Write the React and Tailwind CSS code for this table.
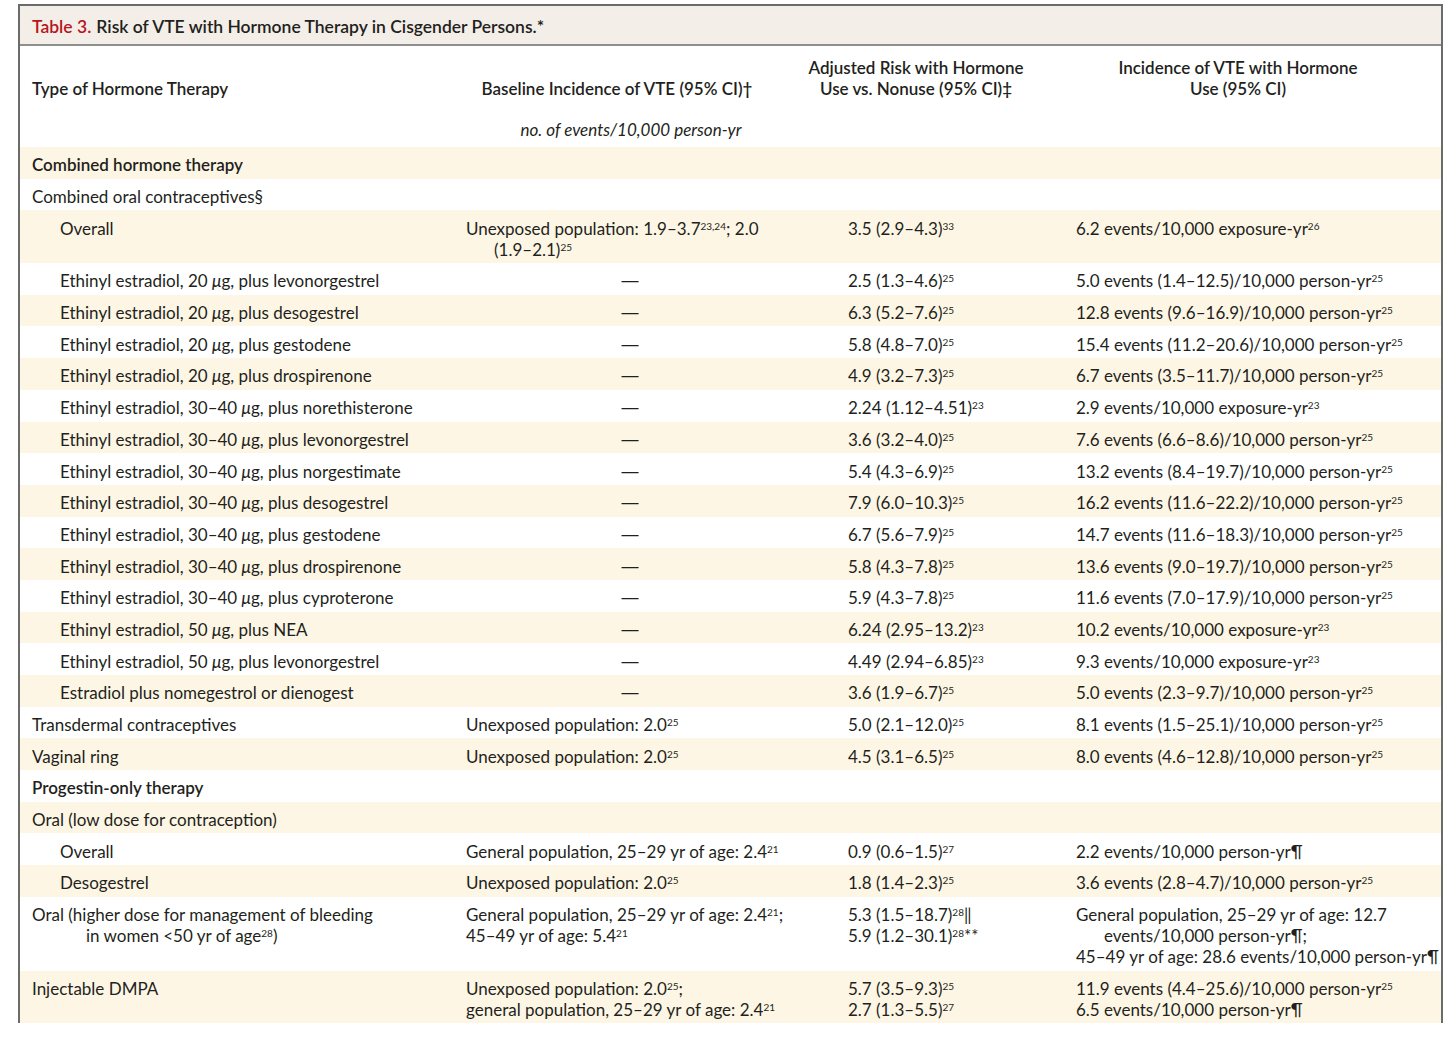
const S = ({ children }) => (
  <sup className="text-[10px]">{children}</sup>
);

const Mu = () => <span className="italic">μ</span>;

const Dash = () => (
  <div
    className="-ml-[10px] w-[348px] text-center"
    style={{ fontFamily: "'Liberation Sans', sans-serif" }}
  >
    —
  </div>
);

const rows = [
  { group: true, a: "Combined hormone therapy" },
  { a: "Combined oral contraceptives§" },
  {
    ind: true,
    a: "Overall",
    b: (
      <>
        <div>
          Unexposed population: 1.9–3.7<S>23,24</S>; 2.0
        </div>
        <div className="pl-[28px]">
          (1.9–2.1)<S>25</S>
        </div>
      </>
    ),
    c: (
      <>
        3.5 (2.9–4.3)<S>33</S>
      </>
    ),
    d: (
      <>
        6.2 events/10,000 exposure-yr<S>26</S>
      </>
    ),
  },
  { ind: true, dose: "20", drug: "levonorgestrel", c: ["2.5 (1.3–4.6)", "25"], d: ["5.0 events (1.4–12.5)/10,000 person-yr", "25"] },
  { ind: true, dose: "20", drug: "desogestrel", c: ["6.3 (5.2–7.6)", "25"], d: ["12.8 events (9.6–16.9)/10,000 person-yr", "25"] },
  { ind: true, dose: "20", drug: "gestodene", c: ["5.8 (4.8–7.0)", "25"], d: ["15.4 events (11.2–20.6)/10,000 person-yr", "25"] },
  { ind: true, dose: "20", drug: "drospirenone", c: ["4.9 (3.2–7.3)", "25"], d: ["6.7 events (3.5–11.7)/10,000 person-yr", "25"] },
  { ind: true, dose: "30–40", drug: "norethisterone", c: ["2.24 (1.12–4.51)", "23"], d: ["2.9 events/10,000 exposure-yr", "23"] },
  { ind: true, dose: "30–40", drug: "levonorgestrel", c: ["3.6 (3.2–4.0)", "25"], d: ["7.6 events (6.6–8.6)/10,000 person-yr", "25"] },
  { ind: true, dose: "30–40", drug: "norgestimate", c: ["5.4 (4.3–6.9)", "25"], d: ["13.2 events (8.4–19.7)/10,000 person-yr", "25"] },
  { ind: true, dose: "30–40", drug: "desogestrel", c: ["7.9 (6.0–10.3)", "25"], d: ["16.2 events (11.6–22.2)/10,000 person-yr", "25"] },
  { ind: true, dose: "30–40", drug: "gestodene", c: ["6.7 (5.6–7.9)", "25"], d: ["14.7 events (11.6–18.3)/10,000 person-yr", "25"] },
  { ind: true, dose: "30–40", drug: "drospirenone", c: ["5.8 (4.3–7.8)", "25"], d: ["13.6 events (9.0–19.7)/10,000 person-yr", "25"] },
  { ind: true, dose: "30–40", drug: "cyproterone", c: ["5.9 (4.3–7.8)", "25"], d: ["11.6 events (7.0–17.9)/10,000 person-yr", "25"] },
  { ind: true, dose: "50", drug: "NEA", c: ["6.24 (2.95–13.2)", "23"], d: ["10.2 events/10,000 exposure-yr", "23"] },
  { ind: true, dose: "50", drug: "levonorgestrel", c: ["4.49 (2.94–6.85)", "23"], d: ["9.3 events/10,000 exposure-yr", "23"] },
  { ind: true, a: "Estradiol plus nomegestrol or dienogest", b: <Dash />, c: ["3.6 (1.9–6.7)", "25"], d: ["5.0 events (2.3–9.7)/10,000 person-yr", "25"] },
  { a: "Transdermal contraceptives", b: ["Unexposed population: 2.0", "25"], c: ["5.0 (2.1–12.0)", "25"], d: ["8.1 events (1.5–25.1)/10,000 person-yr", "25"] },
  { a: "Vaginal ring", b: ["Unexposed population: 2.0", "25"], c: ["4.5 (3.1–6.5)", "25"], d: ["8.0 events (4.6–12.8)/10,000 person-yr", "25"] },
  { group: true, a: "Progestin-only therapy" },
  { a: "Oral (low dose for contraception)" },
  { ind: true, a: "Overall", b: ["General population, 25–29 yr of age: 2.4", "21"], c: ["0.9 (0.6–1.5)", "27"], d: <>2.2 events/10,000 person-yr¶</> },
  { ind: true, a: "Desogestrel", b: ["Unexposed population: 2.0", "25"], c: ["1.8 (1.4–2.3)", "25"], d: ["3.6 events (2.8–4.7)/10,000 person-yr", "25"] },
  {
    a: (
      <>
        <div>Oral (higher dose for management of bleeding</div>
        <div className="pl-[54px]">
          in women &lt;50 yr of age<S>28</S>)
        </div>
      </>
    ),
    b: (
      <>
        <div>
          General population, 25–29 yr of age: 2.4<S>21</S>;
        </div>
        <div>
          45–49 yr of age: 5.4<S>21</S>
        </div>
      </>
    ),
    c: (
      <>
        <div>
          5.3 (1.5–18.7)<S>28</S>‖
        </div>
        <div>
          5.9 (1.2–30.1)<S>28</S>**
        </div>
      </>
    ),
    d: (
      <>
        <div>General population, 25–29 yr of age: 12.7</div>
        <div className="pl-[28px]">events/10,000 person-yr¶;</div>
        <div>45–49 yr of age: 28.6 events/10,000 person-yr¶</div>
      </>
    ),
  },
  {
    a: "Injectable DMPA",
    b: (
      <>
        <div>
          Unexposed population: 2.0<S>25</S>;
        </div>
        <div>
          general population, 25–29 yr of age: 2.4<S>21</S>
        </div>
      </>
    ),
    c: (
      <>
        <div>
          5.7 (3.5–9.3)<S>25</S>
        </div>
        <div>
          2.7 (1.3–5.5)<S>27</S>
        </div>
      </>
    ),
    d: (
      <>
        <div>
          11.9 events (4.4–25.6)/10,000 person-yr<S>25</S>
        </div>
        <div>6.5 events/10,000 person-yr¶</div>
      </>
    ),
  },
];

// [text, footnote] pairs become text + superscript
const cell = (v) => {
  if (Array.isArray(v)) {
    return (
      <>
        {v[0]}
        <S>{v[1]}</S>
      </>
    );
  }
  return v;
};

const Row = ({ row, stripe }) => {
  const label = row.dose ? (
    <>
      Ethinyl estradiol, {row.dose} <Mu />g, plus {row.drug}
    </>
  ) : (
    row.a
  );
  const b = row.dose ? <Dash /> : row.b;

  return (
    <div
      className={`grid grid-cols-[436px_382px_228px_1fr] pb-[3.35px] pt-[7.35px] leading-[21px] ${
        stripe ? "bg-[#fdf6e5]" : "bg-white"
      }`}
    >
      <div
        className={`${row.ind ? "pl-[40px]" : "pl-[12px]"} ${
          row.group ? "font-semibold" : ""
        }`}
      >
        {label}
      </div>
      <div className="pl-[10px]">{cell(b)}</div>
      <div className="pl-[10px]">{cell(row.c)}</div>
      <div className="pl-[10px]">{cell(row.d)}</div>
    </div>
  );
};

export default function App() {
  return (
    <div
      className="min-h-screen bg-white pt-[4px] text-[17px] text-[#231f20]"
      style={{ fontFamily: "Lato, 'Open Sans', sans-serif" }}
    >
      <div className="ml-[18px] w-[1425px] border-x-2 border-t-2 border-[#6b6b6b]">
        {/* title */}
        <div className="flex h-[40px] items-center border-b-2 border-[#8e8e8e] bg-[#f4eee8] pl-[12px] pt-[4px] text-[17.5px] font-semibold">
          <span className="text-[#b8151f]">Table 3.</span>
          <span className="ml-[5px]">
            Risk of VTE with Hormone Therapy in Cisgender Persons.*
          </span>
        </div>

        {/* column headers */}
        <div className="pb-[7px] pt-[11px] leading-[21px]">
          <div className="flex items-end font-semibold">
            <div className="w-[436px] pl-[12px]">Type of Hormone Therapy</div>
            <div className="w-[322px] text-center">
              Baseline Incidence of VTE (95% CI)†
            </div>
            <div className="w-[276px] text-center">
              Adjusted Risk with Hormone
              <br />
              Use vs. Nonuse (95% CI)‡
            </div>
            <div className="w-[368px] text-center">
              Incidence of VTE with Hormone
              <br />
              Use (95% CI)
            </div>
          </div>
          <div className="mt-[20px] flex">
            <div className="w-[436px]" />
            <div className="w-[350px] text-center italic">
              no. of events/10,000 person-yr
            </div>
          </div>
        </div>

        {/* body */}
        {rows.map((row, i) => (
          <Row key={i} row={row} stripe={i % 2 === 0} />
        ))}
      </div>
    </div>
  );
}
